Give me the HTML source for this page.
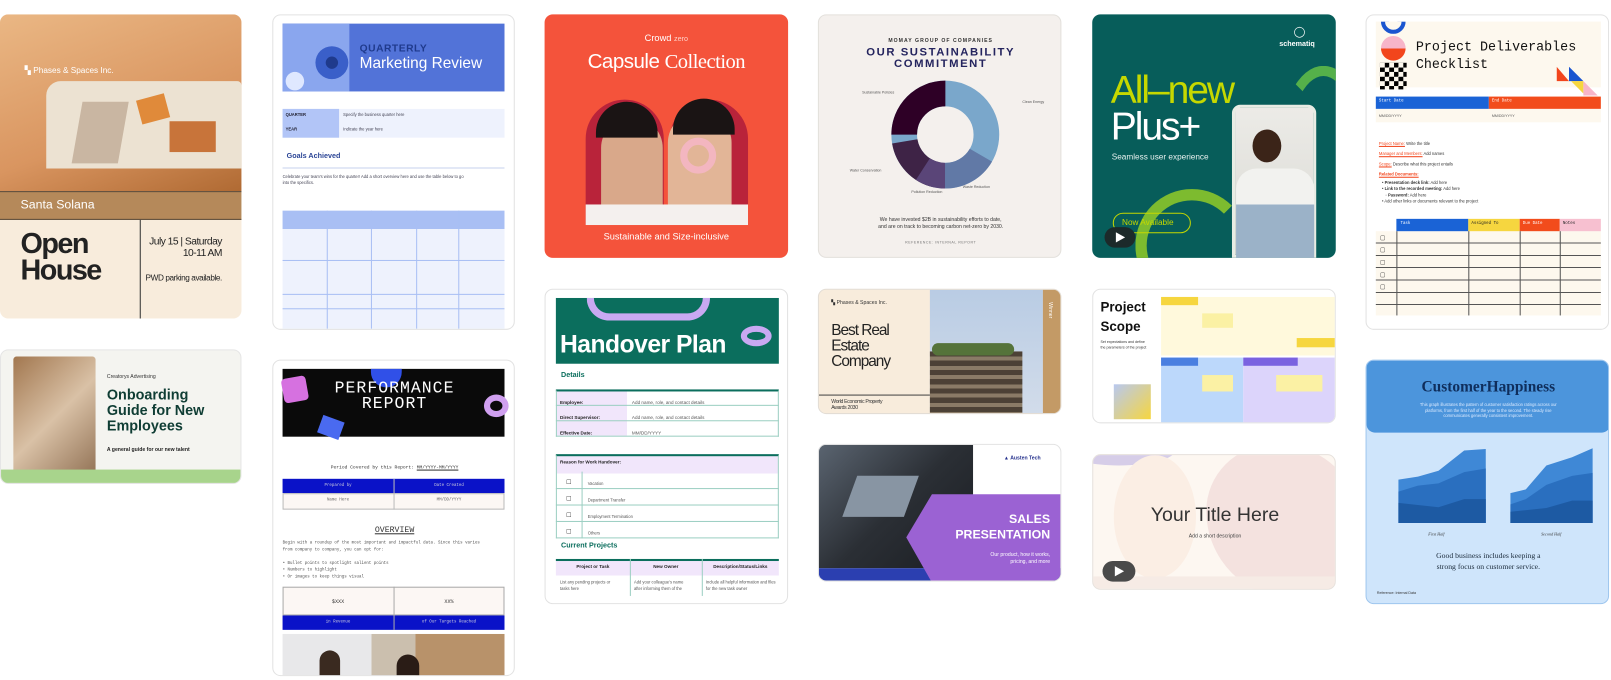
<!DOCTYPE html>
<html><head><meta charset="utf-8"><style>
*{margin:0;padding:0;box-sizing:border-box}
body{width:1611px;height:680px;background:#fff;position:relative;overflow:hidden;font-family:"Liberation Sans",sans-serif}
#w{position:absolute;left:0;top:0;width:1568px;height:662px;transform:scale(1.0275);transform-origin:0 0}
.c{position:absolute;border-radius:8px;overflow:hidden}
.b{border:1px solid #e2e2e2;background:#fff}
.a{position:absolute}
.t{position:absolute;white-space:nowrap}
.mono{font-family:"Liberation Mono",monospace}
</style></head><body><div id="w">

<!-- Open House -->
<div class="c" style="left:0;top:14px;width:235px;height:296px;background:#f8ecdc">
 <div class="a" style="left:0;top:0;width:235px;height:172px;background:linear-gradient(160deg,#eab784,#d99560 60%,#b06a33)"></div>
 <div class="a" style="left:45px;top:65px;width:190px;height:85px;background:#ece2d2;border-radius:14px 4px 0 0"></div>
 <div class="a" style="left:135px;top:80px;width:28px;height:24px;background:#e08a3a;transform:rotate(-15deg)"></div>
 <div class="a" style="left:165px;top:104px;width:45px;height:30px;background:#c8743a"></div>
 <div class="a" style="left:75px;top:85px;width:45px;height:60px;background:#c9b6a2;transform:skew(-10deg)"></div>
 <div class="a" style="left:0;top:172px;width:235px;height:28px;background:#b5895a;border-top:1px solid #5a4a3a;border-bottom:1px solid #5a4a3a"></div>
 <div class="t" style="left:20px;top:178px;color:#fff;font-size:12px">Santa Solana</div>
 <div class="a" style="left:136px;top:200px;width:1px;height:96px;background:#333"></div>
 <div class="t" style="left:20px;top:210px;font-size:28px;font-weight:bold;line-height:26px;letter-spacing:-1.5px;color:#222">Open<br>House</div>
 <div class="t" style="right:19px;top:216px;font-size:10px;text-align:right;line-height:11px;color:#222;letter-spacing:-.5px">July 15 | Saturday<br>10-11 AM</div>
 <div class="t" style="right:19px;top:252px;font-size:8px;color:#222;letter-spacing:-.4px">PWD parking available.</div>
 <div class="t" style="left:24px;top:50px;color:#fff;font-size:8px">▚ Phases &amp; Spaces Inc.</div>
</div>

<!-- Onboarding -->
<div class="c" style="left:0;top:340px;width:235px;height:131px;background:#f4f4f0;border:1px solid #e5e5e5">
 <div class="a" style="left:12px;top:6px;width:80px;height:120px;background:linear-gradient(135deg,#a2774f,#d9c1a6 50%,#8f6f52);border-radius:3px"></div>
 <div class="a" style="left:0;top:116px;width:235px;height:15px;background:#a8d48c"></div>
 <div class="t" style="left:103px;top:23px;font-size:5px;color:#333">Creatorys Advertising</div>
 <div class="t" style="left:103px;top:36px;font-size:14px;font-weight:bold;line-height:15px;color:#0f3d34">Onboarding<br>Guide for New<br>Employees</div>
 <div class="t" style="left:103px;top:94px;font-size:5px;color:#222;font-weight:bold">A general guide for our new talent</div>
</div>

<!-- Quarterly -->
<div class="c b" style="left:265px;top:14px;width:236px;height:307px">
 <div class="a" style="left:9px;top:8px;width:216px;height:66px;background:#5273d8"></div>
 <div class="a" style="left:9px;top:8px;width:65px;height:66px;background:#8aa6ee"></div>
 <div class="a" style="left:41px;top:30px;width:32px;height:32px;border-radius:50%;background:#3a5fc9"></div>
 <div class="a" style="left:51px;top:40px;width:12px;height:12px;border-radius:50%;background:#1f3a8c"></div>
 <div class="a" style="left:12px;top:55px;width:18px;height:18px;background:#dfe8ff;border-radius:50%"></div>
 <div class="t" style="left:84px;top:27px;font-size:10px;font-weight:bold;color:#1f3a8c;letter-spacing:.5px">QUARTERLY</div>
 <div class="t" style="left:84px;top:38px;font-size:15px;color:#fff">Marketing Review</div>
 <div class="a" style="left:9px;top:91px;width:216px;height:28px;background:#eef2fd"></div>
 <div class="a" style="left:9px;top:91px;width:55px;height:28px;background:#b2c5f7"></div>
 <div class="t" style="left:12px;top:94px;font-size:4px;font-weight:bold;color:#223">QUARTER</div>
 <div class="t" style="left:12px;top:108px;font-size:4px;font-weight:bold;color:#223">YEAR</div>
 <div class="t" style="left:68px;top:94px;font-size:4px;color:#445">Specify the business quarter here</div>
 <div class="t" style="left:68px;top:108px;font-size:4px;color:#445">Indicate the year here</div>
 <div class="t" style="left:13px;top:134px;font-size:7px;font-weight:bold;color:#2b4596">Goals Achieved</div>
 <div class="a" style="left:9px;top:148px;width:216px;height:1px;background:#c8d2ee"></div>
 <div class="t" style="left:9px;top:154px;font-size:4px;color:#445;line-height:6px">Celebrate your team's wins for the quarter! Add a short overview here and use the table below to go<br>into the specifics.</div>
 <div class="a" style="left:9px;top:190px;width:216px;height:115px;background:linear-gradient(#a9bff4 0 18px,#eef2fd 18px)"></div>
 <div class="a" style="left:52px;top:190px;width:1px;height:115px;background:#a9bff4"></div>
 <div class="a" style="left:95px;top:190px;width:1px;height:115px;background:#a9bff4"></div>
 <div class="a" style="left:139px;top:190px;width:1px;height:115px;background:#a9bff4"></div>
 <div class="a" style="left:180px;top:190px;width:1px;height:115px;background:#a9bff4"></div>
 <div class="a" style="left:9px;top:238px;width:216px;height:1px;background:#a9bff4"></div>
 <div class="a" style="left:9px;top:271px;width:216px;height:1px;background:#a9bff4"></div>
 <div class="a" style="left:9px;top:285px;width:216px;height:1px;background:#a9bff4"></div>
</div>

<!-- Performance report -->
<div class="c b" style="left:265px;top:350px;width:236px;height:308px">
 <div class="a" style="left:9px;top:8px;width:216px;height:66px;background:#0a0a0a"></div>
 <div class="a" style="left:9px;top:16px;width:24px;height:24px;background:#d671e0;border-radius:4px;transform:rotate(-10deg)"></div>
 <div class="a" style="left:95px;top:8px;width:30px;height:18px;border-radius:0 0 15px 15px;background:#3050e8"></div>
 <div class="a" style="left:205px;top:33px;width:24px;height:22px;border-radius:50%;border:6px solid #d0a0f0"></div>
 <div class="a" style="left:45px;top:56px;width:22px;height:18px;background:#4a6af0;transform:rotate(20deg)"></div>
 <div class="t mono" style="left:0;width:236px;text-align:center;top:20px;font-size:16px;color:#fff;line-height:15px;letter-spacing:1px">PERFORMANCE<br>REPORT</div>
 <div class="t mono" style="left:0;width:236px;text-align:center;top:102px;font-size:4.5px;color:#333">Period Covered by this Report: <u>MM/YYYY-MM/YYYY</u></div>
 <div class="a" style="left:9px;top:115px;width:216px;height:14px;background:#0a12c8"></div>
 <div class="a" style="left:9px;top:129px;width:216px;height:16px;background:#fcf7f4;border:1px solid #bbb"></div>
 <div class="a" style="left:117px;top:115px;width:1px;height:30px;background:#bbb"></div>
 <div class="t mono" style="left:9px;width:108px;text-align:center;top:120px;font-size:4px;color:#ccd">Prepared by</div>
 <div class="t mono" style="left:117px;width:108px;text-align:center;top:120px;font-size:4px;color:#ccd">Date Created</div>
 <div class="t mono" style="left:9px;width:108px;text-align:center;top:134px;font-size:4px;color:#666">Name Here</div>
 <div class="t mono" style="left:117px;width:108px;text-align:center;top:134px;font-size:4px;color:#666">MM/DD/YYYY</div>
 <div class="t mono" style="left:0;width:236px;text-align:center;top:161px;font-size:8px;color:#333;text-decoration:underline">OVERVIEW</div>
 <div class="t mono" style="left:9px;top:175px;font-size:4px;color:#555;line-height:6.5px">Begin with a roundup of the most important and impactful data. Since this varies<br>from company to company, you can opt for:<br><br>• Bullet points to spotlight salient points<br>• Numbers to highlight<br>• Or images to keep things visual</div>
 <div class="a" style="left:9px;top:220px;width:216px;height:28px;background:#fcf7f4;border:1px solid #aaa"></div>
 <div class="a" style="left:9px;top:248px;width:216px;height:14px;background:#0a12c8"></div>
 <div class="a" style="left:117px;top:220px;width:1px;height:42px;background:#aaa"></div>
 <div class="t mono" style="left:9px;width:108px;text-align:center;top:232px;font-size:5px;color:#333">$XXX</div>
 <div class="t mono" style="left:117px;width:108px;text-align:center;top:232px;font-size:5px;color:#333">XX%</div>
 <div class="t mono" style="left:9px;width:108px;text-align:center;top:253px;font-size:4px;color:#ccd">in Revenue</div>
 <div class="t mono" style="left:117px;width:108px;text-align:center;top:253px;font-size:4px;color:#ccd">of Our Targets Reached</div>
 <div class="a" style="left:9px;top:266px;width:216px;height:42px;background:linear-gradient(90deg,#e8e8ea 0 40%,#cbbfae 40% 60%,#b8926a 60%)"></div>
 <div class="a" style="left:45px;top:282px;width:20px;height:26px;border-radius:10px 10px 0 0;background:#3a2a20"></div>
 <div class="a" style="left:120px;top:286px;width:22px;height:22px;border-radius:11px 11px 0 0;background:#2a1c16"></div>
</div>

<!-- Capsule -->
<div class="c" style="left:530px;top:14px;width:237px;height:237px;background:#f4533b">
 <div class="t" style="left:0;width:237px;text-align:center;top:18px;font-size:9px;color:#fff">Crowd <span style="font-size:7px;color:#ffd0c8">zero</span></div>
 <div class="t" style="left:0;width:237px;text-align:center;top:35px;font-size:20px;color:#fff;letter-spacing:-.5px">Capsule <span style="font-family:'Liberation Serif',serif">Collection</span></div>
 <div class="a" style="left:40px;top:83px;width:76px;height:122px;border-radius:38px 38px 0 0;background:#b9233a"></div>
 <div class="a" style="left:122px;top:83px;width:76px;height:122px;border-radius:38px 38px 0 0;background:#b9233a"></div>
 <div class="a" style="left:55px;top:100px;width:60px;height:105px;border-radius:30px 30px 10px 10px;background:#d9a88a"></div>
 <div class="a" style="left:120px;top:95px;width:62px;height:110px;border-radius:30px 30px 10px 10px;background:#e2b597"></div>
 <div class="a" style="left:50px;top:85px;width:60px;height:35px;border-radius:30px 30px 0 0;background:#1a1414"></div>
 <div class="a" style="left:125px;top:82px;width:60px;height:35px;border-radius:30px 30px 0 0;background:#1a1414"></div>
 <div class="a" style="left:132px;top:120px;width:35px;height:35px;border-radius:50%;border:7px solid #f3b6c0"></div>
 <div class="a" style="left:40px;top:185px;width:158px;height:20px;background:#f4f0ee"></div>
 <div class="t" style="left:0;width:237px;text-align:center;top:211px;font-size:9px;color:#fff">Sustainable and Size-inclusive</div>
</div>

<!-- Handover -->
<div class="c b" style="left:530px;top:281px;width:237px;height:307px">
 <div class="a" style="left:10px;top:8px;width:217px;height:64px;background:#0b6e5d"></div>
 <div class="a" style="left:40px;top:8px;width:120px;height:22px;border-radius:0 0 40px 40px;border:7px solid #c9a9f2;border-top:none"></div>
 <div class="a" style="left:190px;top:35px;width:30px;height:20px;border-radius:50%;border:6px solid #c9a9f2"></div>
 <div class="t" style="left:14px;top:40px;font-size:24px;font-weight:bold;color:#fff;letter-spacing:-.5px">Handover Plan</div>
 <div class="t" style="left:15px;top:80px;font-size:7px;font-weight:bold;color:#0b6e5d">Details</div>
 <div class="a" style="left:10px;top:97px;width:217px;height:46px;border:1px solid #9ccfc2;border-top:2px solid #0b6e5d;background:linear-gradient(90deg,#f1e6fb 0 68px,#fff 68px)"></div>
 <div class="a" style="left:10px;top:112px;width:217px;height:1px;background:#9ccfc2"></div>
 <div class="a" style="left:10px;top:127px;width:217px;height:1px;background:#9ccfc2"></div>
 <div class="t" style="left:14px;top:102px;font-size:4.5px;font-weight:bold;line-height:15px;color:#222">Employee:<br>Direct Supervisor:<br>Effective Date:</div>
 <div class="t" style="left:84px;top:102px;font-size:4.5px;line-height:15px;color:#555">Add name, role, and contact details<br>Add name, role, and contact details<br>MM/DD/YYYY</div>
 <div class="a" style="left:10px;top:160px;width:217px;height:82px;border:1px solid #9ccfc2;border-top:2px solid #0b6e5d;background:linear-gradient(#f1e6fb 0 17px,#fff 17px)"></div>
 <div class="t" style="left:14px;top:165px;font-size:4.5px;font-weight:bold;color:#222">Reason for Work Handover:</div>
 <div class="a" style="left:35px;top:177px;width:1px;height:65px;background:#9ccfc2"></div>
 <div class="a" style="left:10px;top:193px;width:217px;height:1px;background:#9ccfc2"></div>
 <div class="a" style="left:10px;top:209px;width:217px;height:1px;background:#9ccfc2"></div>
 <div class="a" style="left:10px;top:225px;width:217px;height:1px;background:#9ccfc2"></div>
 <div class="t" style="left:20px;top:180px;font-size:6px;line-height:16px;color:#333">☐<br>☐<br>☐<br>☐</div>
 <div class="t" style="left:41px;top:181px;font-size:4px;line-height:16px;color:#555">Vacation<br>Department Transfer<br>Employment Termination<br>Others</div>
 <div class="t" style="left:15px;top:246px;font-size:7px;font-weight:bold;color:#0b6e5d">Current Projects</div>
 <div class="a" style="left:10px;top:262px;width:217px;height:36px;border-top:2px solid #0b6e5d;background:linear-gradient(#f1e6fb 0 14px,#fff 14px)"></div>
 <div class="a" style="left:82px;top:262px;width:1px;height:36px;background:#9ccfc2"></div>
 <div class="a" style="left:152px;top:262px;width:1px;height:36px;background:#9ccfc2"></div>
 <div class="t" style="left:10px;width:72px;text-align:center;top:267px;font-size:4.5px;font-weight:bold;color:#222">Project or Task</div>
 <div class="t" style="left:82px;width:70px;text-align:center;top:267px;font-size:4.5px;font-weight:bold;color:#222">New Owner</div>
 <div class="t" style="left:152px;width:75px;text-align:center;top:267px;font-size:4.5px;font-weight:bold;color:#222">Description/Status/Links</div>
 <div class="t" style="left:14px;top:282px;font-size:4px;color:#555;line-height:6px">List any pending projects or<br>tasks here</div>
 <div class="t" style="left:86px;top:282px;font-size:4px;color:#555;line-height:6px">Add your colleague's name<br>after informing them of the</div>
 <div class="t" style="left:156px;top:282px;font-size:4px;color:#555;line-height:6px">Include all helpful information and files<br>for the new task owner</div>
</div>

<!-- Sustainability -->
<div class="c" style="left:796px;top:14px;width:237px;height:237px;background:#f4f0ed;border:1px solid #e3e0dc">
 <div class="t" style="left:0;width:237px;text-align:center;top:22px;font-size:5px;font-weight:bold;color:#333;letter-spacing:1px">MOMAY GROUP OF COMPANIES</div>
 <div class="t" style="left:0;width:237px;text-align:center;top:31px;font-size:11px;font-weight:900;color:#24245e;letter-spacing:1.5px;line-height:11px">OUR SUSTAINABILITY<br>COMMITMENT</div>
 <svg class="a" style="left:70px;top:63px" width="106" height="106" viewBox="-53 -53 106 106">
  <circle r="40" fill="none" stroke="#7aa7cb" stroke-width="25"/>
  <circle r="40" fill="none" stroke="#2e0026" stroke-width="25" stroke-dasharray="62.8 251.3" transform="rotate(180)"/>
  <circle r="40" fill="none" stroke="#3e2346" stroke-width="25" stroke-dasharray="47 251.3" transform="rotate(103)"/>
  <circle r="40" fill="none" stroke="#5a4578" stroke-width="25" stroke-dasharray="23 251.3" transform="rotate(90)"/>
  <circle r="40" fill="none" stroke="#6179a6" stroke-width="25" stroke-dasharray="42 251.3" transform="rotate(30)"/>
 </svg>
 <div class="t" style="left:42px;top:73px;font-size:3.5px;color:#555">Sustainable Policies</div>
 <div class="t" style="left:198px;top:82px;font-size:3.5px;color:#555">Clean Energy</div>
 <div class="t" style="left:30px;top:149px;font-size:3.5px;color:#555">Water Conservation</div>
 <div class="t" style="left:90px;top:170px;font-size:3.5px;color:#555">Pollution Reduction</div>
 <div class="t" style="left:140px;top:165px;font-size:3.5px;color:#555">Waste Reduction</div>
 <div class="t" style="left:0;width:237px;text-align:center;top:196px;font-size:5px;color:#333;line-height:7px">We have invested $2B in sustainability efforts to date,<br>and are on track to becoming carbon net-zero by 2030.</div>
 <div class="t" style="left:0;width:237px;text-align:center;top:219px;font-size:3.5px;color:#777;letter-spacing:.5px">REFERENCE: INTERNAL REPORT</div>
</div>

<!-- Best Real Estate -->
<div class="c" style="left:796px;top:281px;width:237px;height:122px;background:#f8ecdc;border:1px solid #e3ddd5">
 <div class="a" style="left:108px;top:0;width:110px;height:122px;background:linear-gradient(#b9cce4,#d2dcea)"></div>
 <div class="a" style="left:108px;top:60px;width:90px;height:62px;background:repeating-linear-gradient(#4c4136 0 5px,#8a7b67 5px 9px)"></div>
 <div class="a" style="left:110px;top:52px;width:80px;height:12px;background:#55733a;border-radius:6px"></div>
 <div class="a" style="left:218px;top:0;width:19px;height:122px;background:#c39a66"></div>
 <div class="t" style="left:222px;top:12px;font-size:5px;color:#fff;writing-mode:vertical-rl">Winner</div>
 <div class="a" style="left:0;top:102px;width:108px;height:1px;background:#444"></div>
 <div class="t" style="left:12px;top:10px;font-size:5px;color:#333">▚ Phases &amp; Spaces Inc.</div>
 <div class="t" style="left:12px;top:32px;font-size:15px;line-height:15px;color:#222;letter-spacing:-1px">Best Real<br>Estate<br>Company</div>
 <div class="t" style="left:12px;top:106px;font-size:5px;color:#333;line-height:6px;letter-spacing:-.3px">World Economic Property<br>Awards 2030</div>
</div>

<!-- Sales -->
<div class="c" style="left:796px;top:432px;width:237px;height:134px;background:#fff;border:1px solid #e3e3e3">
 <div class="a" style="left:0;top:0;width:150px;height:120px;background:linear-gradient(135deg,#5a6470,#2b2f35 50%,#1a1d22)"></div>
 <div class="a" style="left:30px;top:30px;width:60px;height:40px;background:#8895a3;transform:skew(-20deg)"></div>
 <div class="a" style="left:0;top:120px;width:237px;height:14px;background:#2b3fb0"></div>
 <svg class="a" style="left:0;top:0" width="237" height="134"><polygon points="110,134 85,90 110,48 237,48 237,134" fill="#9b62d3"/></svg>
 <div class="t" style="left:180px;top:10px;font-size:5px;font-weight:bold;color:#24308c">▲ Austen Tech</div>
 <div class="t" style="right:10px;top:65px;font-size:12px;font-weight:bold;color:#fff;text-align:right;line-height:15px">SALES<br>PRESENTATION</div>
 <div class="t" style="right:10px;top:104px;font-size:5px;color:#fff;text-align:right;line-height:7px">Our product, how it works,<br>pricing, and more</div>
</div>

<!-- All-new Plus -->
<div class="c" style="left:1063px;top:14px;width:237px;height:237px;background:#075d5a">
 <div class="a" style="left:180px;top:50px;width:90px;height:180px;border-radius:50%;border:10px solid #55b04a;border-left-color:transparent;border-bottom-color:transparent"></div>
 <div class="a" style="left:42px;top:170px;width:110px;height:110px;border-radius:50%;border:11px solid #7dbb2f;border-right-color:transparent;border-bottom-color:transparent"></div>
 <div class="t" style="left:18px;top:56px;font-size:38px;color:#c6d800;letter-spacing:-2px;line-height:36px">All–new</div>
 <div class="t" style="left:18px;top:92px;font-size:38px;color:#fff;letter-spacing:-2px;line-height:36px">Plus+</div>
 <div class="t" style="left:19px;top:134px;font-size:8px;color:#e6f0ee">Seamless user experience</div>
 <div class="a" style="left:136px;top:88px;width:82px;height:149px;border-radius:8px 8px 0 0;border:3px solid #e8ece4;background:linear-gradient(#ecebe7,#d9d9d3)"></div>
 <div class="a" style="left:156px;top:112px;width:28px;height:32px;border-radius:50%;background:#3b2418"></div>
 <div class="a" style="left:140px;top:150px;width:76px;height:87px;background:linear-gradient(#f2f2ef 40%,#9bb2c8 40%);border-radius:20px 20px 0 0"></div>
 <div class="a" style="left:20px;top:193px;width:76px;height:20px;border-radius:10px;border:1px solid #c6d800"></div>
 <div class="t" style="left:29px;top:198px;font-size:8px;color:#c6d800">Now Available</div>
 <div class="a" style="left:12px;top:207px;width:30px;height:20px;border-radius:10px;background:#1c2a2a"></div>
 <div class="a" style="left:23px;top:212px;width:0;height:0;border-left:9px solid #fff;border-top:5px solid transparent;border-bottom:5px solid transparent"></div>
 <div class="t" style="left:196px;top:12px;font-size:10px;color:#fff">◯</div>
 <div class="t" style="left:182px;top:26px;font-size:7px;font-weight:bold;color:#fff">schematiq</div>
</div>

<!-- Project Scope -->
<div class="c" style="left:1063px;top:281px;width:237px;height:131px;background:#fff;border:1px solid #e3e3e3">
 <div class="t" style="left:7px;top:7px;font-size:13px;font-weight:bold;color:#111;line-height:19px">Project<br>Scope</div>
 <div class="t" style="left:7px;top:49px;font-size:3.5px;color:#333;line-height:5px">Set expectations and define<br>the parameters of the project</div>
 <div class="a" style="left:66px;top:7px;width:171px;height:57px;background:#fff9dc"></div>
 <div class="a" style="left:66px;top:7px;width:36px;height:8px;background:#f6d63f"></div>
 <div class="a" style="left:106px;top:23px;width:30px;height:14px;background:#fbf1a4"></div>
 <div class="a" style="left:198px;top:47px;width:39px;height:9px;background:#f6d63f"></div>
 <div class="a" style="left:66px;top:66px;width:80px;height:65px;background:#bcd8fb"></div>
 <div class="a" style="left:66px;top:66px;width:36px;height:8px;background:#4a7fe0"></div>
 <div class="a" style="left:146px;top:66px;width:91px;height:65px;background:#dcd4fb"></div>
 <div class="a" style="left:146px;top:66px;width:53px;height:8px;background:#7a62e0"></div>
 <div class="a" style="left:106px;top:83px;width:30px;height:16px;background:#fbf1a4"></div>
 <div class="a" style="left:178px;top:83px;width:45px;height:16px;background:#fbf1a4"></div>
 <div class="a" style="left:20px;top:92px;width:36px;height:34px;background:linear-gradient(135deg,#b8c8f0,#f6d63f)"></div>
</div>

<!-- Your Title Here -->
<div class="c" style="left:1063px;top:442px;width:237px;height:132px;background:#fdf7f1;border:1px solid #e6e1dc">
 <div class="a" style="left:-30px;top:-20px;width:110px;height:30px;border-radius:50%;background:#d6cde8"></div>
 <div class="a" style="left:110px;top:-10px;width:150px;height:150px;border-radius:45% 55% 40% 60%;background:#f4e2df"></div>
 <div class="a" style="left:20px;top:0;width:80px;height:120px;border-radius:50%;background:#fbeee4"></div>
 <div class="a" style="left:0;top:118px;width:237px;height:14px;background:#f6ebe5"></div>
 <div class="t" style="left:0;width:237px;text-align:center;top:48px;font-size:19px;color:#333">Your Title Here</div>
 <div class="t" style="left:0;width:237px;text-align:center;top:76px;font-size:5px;color:#444">Add a short description</div>
 <div class="a" style="left:9px;top:103px;width:32px;height:20px;border-radius:10px;background:#4a4a4a"></div>
 <div class="a" style="left:21px;top:108px;width:0;height:0;border-left:9px solid #fff;border-top:5px solid transparent;border-bottom:5px solid transparent"></div>
</div>

<!-- Deliverables -->
<div class="c b" style="left:1329px;top:14px;width:237px;height:307px">
 <div class="a" style="left:9px;top:6px;width:219px;height:64px;background:#fdf8ee"></div>
 <div class="a" style="left:14px;top:6px;width:24px;height:12px;border:4px solid #1a55d0;border-top:none;border-radius:0 0 12px 12px"></div>
 <div class="a" style="left:14px;top:20px;width:24px;height:24px;border-radius:50%;background:linear-gradient(#f7b5c9 50%,#f2451c 50%)"></div>
 <div class="a" style="left:13px;top:46px;width:26px;height:26px;background:conic-gradient(#000 25%,#fdf8ee 0 50%,#000 0 75%,#fdf8ee 0);background-size:9px 9px"></div>
 <div class="t mono" style="left:48px;top:22px;font-size:13px;color:#111;line-height:17px">Project Deliverables<br>Checklist</div>
 <svg class="a" style="left:185px;top:50px" width="42" height="28"><polygon points="0,0 12,14 0,14" fill="#f2451c"/><polygon points="12,0 26,14 12,14" fill="#1a55d0"/><polygon points="14,14 26,14 26,26" fill="#f6d63f"/><polygon points="26,14 40,28 26,28" fill="#f7b5c9"/></svg>
 <div class="a" style="left:9px;top:79px;width:110px;height:12px;background:#1a63d6"></div>
 <div class="a" style="left:119px;top:79px;width:109px;height:12px;background:#f24c1c"></div>
 <div class="a" style="left:9px;top:91px;width:219px;height:13px;background:#fdf8ee"></div>
 <div class="t mono" style="left:12px;top:82px;font-size:4px;color:#fff">Start Date</div>
 <div class="t mono" style="left:122px;top:82px;font-size:4px;color:#fff">End Date</div>
 <div class="t" style="left:12px;top:96px;font-size:3.5px;color:#555">MM/DD/YYYY</div>
 <div class="t" style="left:122px;top:96px;font-size:3.5px;color:#555">MM/DD/YYYY</div>
 <div class="t" style="left:12px;top:120px;font-size:4px;color:#333;line-height:10px"><span style="color:#f2451c;text-decoration:underline">Project Name:</span> Write the title<br><span style="color:#f2451c;text-decoration:underline">Manager and Members:</span> Add names<br><span style="color:#f2451c;text-decoration:underline">Scope:</span> Describe what this project entails<br><span style="color:#f2451c;text-decoration:underline;font-weight:bold">Related Documents:</span></div>
 <div class="t" style="left:15px;top:160px;font-size:4px;color:#333;line-height:6px">• <b>Presentation deck link:</b> Add here<br>• <b>Link to the recorded meeting:</b> Add here<br>&nbsp;&nbsp;&nbsp;◦ <b>Password:</b> Add here<br>• Add other links or documents relevant to the project</div>
 <div class="a" style="left:9px;top:210px;width:219px;height:82px;background:#fdf8ee"></div>
 <div class="a" style="left:29px;top:198px;width:70px;height:12px;background:#1a63d6"></div>
 <div class="a" style="left:99px;top:198px;width:50px;height:12px;background:#f6d63f"></div>
 <div class="a" style="left:149px;top:198px;width:39px;height:12px;background:#f24c1c"></div>
 <div class="a" style="left:188px;top:198px;width:40px;height:12px;background:#f7c0d0"></div>
 <div class="t mono" style="left:33px;top:201px;font-size:4px;color:#fff">Task</div>
 <div class="t mono" style="left:102px;top:201px;font-size:4px;color:#222">Assigned To</div>
 <div class="t mono" style="left:152px;top:201px;font-size:4px;color:#fff">Due Date</div>
 <div class="t mono" style="left:191px;top:201px;font-size:4px;color:#222">Notes</div>
 <div class="a" style="left:9px;top:210px;width:219px;height:82px;background:repeating-linear-gradient(transparent 0 11px,#555 11px 12px)"></div>
 <div class="a" style="left:29px;top:210px;width:1px;height:82px;background:#555"></div>
 <div class="a" style="left:99px;top:210px;width:1px;height:82px;background:#555"></div>
 <div class="a" style="left:149px;top:210px;width:1px;height:82px;background:#555"></div>
 <div class="a" style="left:188px;top:210px;width:1px;height:82px;background:#555"></div>
 <div class="t" style="left:13px;top:211px;font-size:6px;line-height:12px;color:#333">▢<br>▢<br>▢<br>▢<br>▢</div>
</div>

<!-- Customer Happiness -->
<div class="c" style="left:1329px;top:350px;width:237px;height:238px;background:#cfe5fb;border:1px solid #9fc6ee">
 <div class="a" style="left:0;top:0;width:237px;height:70px;background:#4c95dc;border-radius:0 0 8px 8px"></div>
 <div class="t" style="left:0;width:237px;text-align:center;top:18px;font-family:'Liberation Serif',serif;font-weight:bold;font-size:15px;color:#0f2e5c">CustomerHappiness</div>
 <div class="t" style="left:0;width:237px;text-align:center;top:40px;font-size:4px;color:#dbeaff;line-height:5.5px">This graph illustrates the pattern of customer satisfaction ratings across our<br>platforms, from the first half of the year to the second. The steady rise<br>communicates generally consistent improvement.</div>
 <svg class="a" style="left:0;top:78px" width="237" height="80" viewBox="0 0 237 110" preserveAspectRatio="none">
  <polygon points="31,110 31,52 50,48 70,40 95,13 116,11 116,110" fill="#3f88d6"/>
  <polygon points="31,110 31,68 50,60 70,57 95,42 116,37 116,110" fill="#2a6fbf"/>
  <polygon points="31,110 31,83 70,89 95,78 116,78 116,110" fill="#1d5aa3"/>
  <polygon points="140,110 140,70 155,65 175,33 200,22 220,10 220,110" fill="#3f88d6"/>
  <polygon points="140,110 140,85 155,78 175,59 200,47 220,43 220,110" fill="#2a6fbf"/>
  <polygon points="140,110 140,95 175,90 200,80 220,80 220,110" fill="#1d5aa3"/>
 </svg>
 <div class="t" style="left:60px;top:166px;font-size:4px;font-style:italic;color:#333;font-family:'Liberation Serif',serif">First Half</div>
 <div class="t" style="left:170px;top:166px;font-size:4px;font-style:italic;color:#333;font-family:'Liberation Serif',serif">Second Half</div>
 <div class="t" style="left:0;width:237px;text-align:center;top:184px;font-size:7.5px;color:#1a2a3a;font-family:'Liberation Serif',serif;line-height:11px">Good business includes keeping a<br>strong focus on customer service.</div>
 <div class="t" style="left:10px;top:224px;font-size:3.5px;color:#333">Reference: Internal Data</div>
</div>

</div></body></html>
